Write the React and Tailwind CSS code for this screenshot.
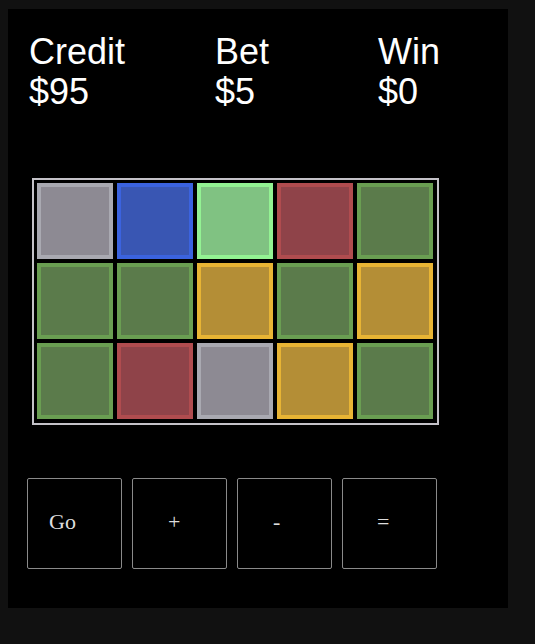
import React from 'react';

const COLORS = {
  gray: 'border-[#a9a9b1] bg-[#8d8a93]',
  blue: 'border-[#3b63df] bg-[#3956b3]',
  lime: 'border-[#93f293] bg-[#80c282]',
  red: 'border-[#b04c4f] bg-[#8f4349]',
  green: 'border-[#6a9e52] bg-[#5b7b4b]',
  gold: 'border-[#e8b434] bg-[#b48e36]',
};

const reels = [
  ['gray', 'blue', 'lime', 'red', 'green'],
  ['green', 'green', 'gold', 'green', 'gold'],
  ['green', 'red', 'gray', 'gold', 'green'],
];

const stats = [
  { label: 'Credit', value: '$95', width: 'w-[186px]' },
  { label: 'Bet', value: '$5', width: 'w-[163px]' },
  { label: 'Win', value: '$0', width: 'w-[100px]' },
];

const buttons = [
  { label: 'Go', pad: 'pl-[21px]' },
  { label: '+', pad: 'pl-[35px]' },
  { label: '-', pad: 'pl-[35px]' },
  { label: '=', pad: 'pl-[34px]' },
];

export default function App() {
  return (
    <div className="min-h-[644px] w-full bg-[#111111] pl-[8px] pt-[9px]">
      <div className="h-[599px] w-[500px] bg-black pl-[21px] pt-[23px]">
        {/* Stats */}
        <div className="flex font-['Liberation_Sans',Arial,sans-serif] text-[36px] leading-[40px] text-white">
          {stats.map((s) => (
            <div key={s.label} className={s.width}>
              <div>{s.label}</div>
              <div>{s.value}</div>
            </div>
          ))}
        </div>

        {/* Reels */}
        <div className="ml-[3px] mt-[66px] inline-block border-2 border-[#c4c2c8] pb-[4px] pl-[3px] pr-[4px] pt-[3px]">
          <div className="grid grid-cols-5 gap-[4px]">
            {reels.flat().map((c, i) => (
              <div key={i} className={`h-[76px] w-[76px] border-4 ${COLORS[c]}`} />
            ))}
          </div>
        </div>

        {/* Controls */}
        <div className="-ml-[2px] mt-[53px] flex gap-[10px]">
          {buttons.map((b) => (
            <button
              key={b.label}
              className={`flex h-[91px] w-[95px] items-center rounded-[2px] border border-[#8a8a8a] bg-black pb-[4px] font-['Liberation_Serif','Times_New_Roman',serif] text-[22px] text-[#dddddd] ${b.pad}`}
            >
              {b.label}
            </button>
          ))}
        </div>
      </div>
    </div>
  );
}
